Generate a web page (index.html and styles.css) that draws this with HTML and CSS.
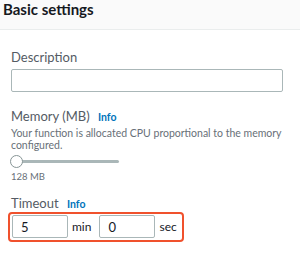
FILE: index.html
```html
<!DOCTYPE html>
<html lang="en">
<head>
    <meta charset="UTF-8">
    <title>Basic settings</title>
    <link rel="stylesheet" href="styles.css">
</head>
<body>

    <div class="panel-header">
        <h2>Basic settings</h2>
    </div>

    <div class="panel-body">
        <div class="field field-description">
            <label>Description</label>
            <input type="text" class="text-input wide">
        </div>

        <div class="field field-memory">
            <label>Memory (MB) <a href="#" class="info">Info</a></label>
            <p class="hint">Your function is allocated CPU proportional to the memory configured.</p>
            <div class="slider">
                <div class="slider-track"></div>
                <div class="slider-thumb"></div>
            </div>
            <div class="slider-value">128 MB</div>
        </div>

        <div class="field field-timeout">
            <label>Timeout <a href="#" class="info">Info</a></label>
            <div class="timeout-row">
                <input type="text" class="text-input short" value="5">
                <span class="unit">min</span>
                <input type="text" class="text-input short" value="0">
                <span class="unit">sec</span>
            </div>
        </div>
    </div>

</body>
</html>
```

FILE: styles.css
```css
body {
    font-family: Lato, "Open Sans", Arial, sans-serif;
    background-color: #ffffff;
    color: #16191f;
    margin: 0;
}
.panel-header {
    height: 30px;
    background-color: #fafafa;
    border-bottom: 1px solid #eaeded;
    box-sizing: border-box;
    padding-top: 1px;
}
.panel-header h2 {
    margin: 0;
    padding: 0 0 0 3px;
    font-size: 15px;
    font-weight: 700;
    line-height: 16px;
}
.panel-body {
    padding: 0 17px 0 11px;
}
.field label {
    display: block;
    font-size: 13px;
    color: #545b64;
    line-height: 16px;
}
.info {
    color: #0073bb;
    font-size: 10.5px;
    font-weight: 700;
    text-decoration: none;
    margin-left: 5px;
}
.field-description {
    padding-top: 19px;
}
.field-description label {
    margin-bottom: 4px;
}
.text-input {
    display: block;
    box-sizing: border-box;
    height: 23px;
    border: 1px solid #aab7b8;
    border-radius: 2px;
    font-family: inherit;
    font-size: 13px;
    color: #16191f;
    padding: 0 8px;
    margin: 0;
    outline: none;
}
.text-input.wide {
    width: 272px;
}
.field-memory {
    padding-top: 16px;
}
.hint {
    margin: 2px 0 0;
    font-size: 10.5px;
    line-height: 12px;
    color: #687078;
}
.slider {
    position: relative;
    width: 109px;
    height: 12px;
    margin: 4px 0 0 -1px;
}
.slider-track {
    position: absolute;
    left: 4px;
    right: 0;
    top: 5px;
    height: 3px;
    background-color: #aab7b8;
    border-radius: 2px;
}
.slider-thumb {
    position: absolute;
    left: 0;
    top: 0;
    width: 11px;
    height: 11px;
    border: 1px solid #879596;
    border-radius: 50%;
    background-color: #ffffff;
}
.slider-value {
    margin-top: 4px;
    font-size: 9.5px;
    line-height: 12px;
    color: #687078;
}
.field-timeout {
    padding-top: 13px;
}
.field-timeout label {
    line-height: 15px;
    margin-bottom: 0;
}
.timeout-row {
    display: inline-flex;
    align-items: center;
    margin-left: -3px;
    padding: 1px 5px 2px 2px;
    border: 2px solid #f0512d;
    border-radius: 4px;
}
.text-input.short {
    width: 56px;
}
.unit {
    font-size: 12px;
    color: #16191f;
    margin-left: 4px;
    margin-right: 8px;
}
.unit:last-child {
    margin-right: 0;
}
```
